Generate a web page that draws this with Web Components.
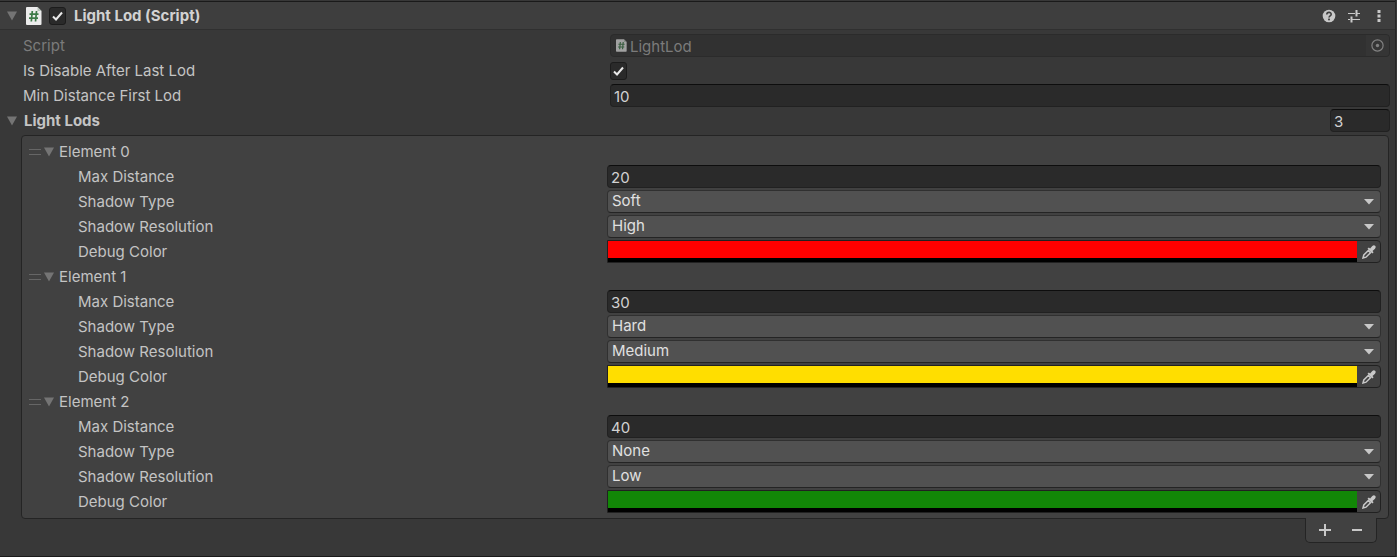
<!DOCTYPE html>
<html lang="en">
<head>
<meta charset="utf-8">
<title>Light Lod (Script)</title>
<style>
html, body { margin: 0; min-height: 100%; background: #383838; }
body { font: 15px/18px Inter, "Liberation Sans", sans-serif; color: #c4c4c4; }
</style>
</head>
<body>
<inspector-panel>
  <component-header heading="Light Lod (Script)"></component-header>
  <object-field label="Script" value="LightLod"></object-field>
  <toggle-field label="Is Disable After Last Lod" checked></toggle-field>
  <number-field label="Min Distance First Lod" value="10"></number-field>
  <reorderable-list label="Light Lods" count="3">
    <lod-element name="Element 0" distance="20" shadow="Soft" resolution="High" color="#ff0000"></lod-element>
    <lod-element name="Element 1" distance="30" shadow="Hard" resolution="Medium" color="#ffde00"></lod-element>
    <lod-element name="Element 2" distance="40" shadow="None" resolution="Low" color="#128707"></lod-element>
  </reorderable-list>
</inspector-panel>

<script>
const base = `
  *, *::before, *::after { box-sizing: border-box; }
  :host { display: block; }
  button, input, select { font: inherit; color: inherit; margin: 0; }
  button { appearance: none; background: none; border: 0; padding: 0; display: grid; place-items: center; }
  svg { display: block; flex: none; }
  .num { width: 100%; height: 23px; padding: 2px 3px 0; color: #d2d2d2; background: #2a2a2a;
    border: 1px solid #212121; border-top-color: #0d0d0d; border-radius: 4px; outline: 0; }
  .check { appearance: none; width: 17px; height: 18px; border: 1px solid #1c1c1c; border-radius: 3px;
    background: #2a2a2a url("data:image/svg+xml,%3Csvg xmlns='http://www.w3.org/2000/svg' width='15' height='16'%3E%3Cpath d='M3 8.5l3 3L12 4.5' fill='none' stroke='%23e8e8e8' stroke-width='2'/%3E%3C/svg%3E") center no-repeat; }
  .check:not(:checked) { background-image: none; }
`;
const esc = s => (s || '').replace(/[&<>"]/g, c => '&#' + c.charCodeAt(0) + ';');
const fold = '<svg width="12" height="10" viewBox="0 0 12 10"><path d="M1 .500h10L6 9.500z" fill="#747474"/></svg>';
const scriptIcon = (w, h) => `<svg width="${w}" height="${h}" viewBox="0 0 16 18"><path d="M1 0h10.500L15.500 4v13a1 1 0 0 1-1 1H1a1 1 0 0 1-1-1V1a1 1 0 0 1 1-1z" fill="#ececec"/><path d="M11.500 0v4h4z" fill="#b9c4bb"/><path d="M6.300 4 5.300 14.500M10.500 4 9.500 14.500M3.500 7.200h9M3 11.200h9" stroke="#3d7a48" stroke-width="1.700" fill="none"/></svg>`;

class Part extends HTMLElement {
  constructor() { super(); this.attachShadow({ mode: 'open' }); }
  connectedCallback() {
    this.shadowRoot.innerHTML = `<style>${base}${this.css()}</style>${this.markup()}`;
  }
  attr(name) { return esc(this.getAttribute(name)); }
  css() { return ''; }
}

/* A label and its control, side by side. */
class Field extends Part {
  css() {
    return `
      .row { display: grid; grid-template-columns: var(--columns, 587fr 780fr); height: 23px; align-items: center; }
      .name { overflow: hidden; white-space: nowrap; text-overflow: ellipsis; }
    ` + this.controlCss();
  }
  controlCss() { return ''; }
  markup() {
    return `<div class="row"><label class="name" for="control">${this.attr('label')}</label>${this.control()}</div>`;
  }
}

customElements.define('number-field', class extends Field {
  control() { return `<input id="control" class="num" type="text" inputmode="numeric" value="${this.attr('value')}">`; }
});

customElements.define('toggle-field', class extends Field {
  control() { return `<input id="control" class="check" type="checkbox" ${this.hasAttribute('checked') ? 'checked' : ''}>`; }
});

customElements.define('object-field', class extends Field {
  controlCss() {
    return `
      .name { color: #7b7b7b; }
      .box { display: flex; align-items: center; height: 23px; padding-left: 5px; gap: 3px;
        background: #313131; border: 1px solid #2b2b2b; border-radius: 4px; overflow: hidden; }
      .box > svg { opacity: .6; }
      input { flex: 1; min-width: 0; height: 21px; padding: 1px 0 0; border: 0; background: none; color: #7b7b7b; outline: 0; }
      button { width: 23px; height: 21px; background: #353535; }
    `;
  }
  control() {
    return `<div class="box">${scriptIcon(11, 13)}
      <input id="control" type="text" value="${this.attr('value')}" disabled>
      <button type="button" aria-label="Select object" disabled><svg width="13" height="13" viewBox="0 0 13 13"><circle cx="6.500" cy="6.500" r="5.600" fill="none" stroke="#818181" stroke-width="1.200"/><circle cx="6.500" cy="6.500" r="1.700" fill="#818181"/></svg></button></div>`;
  }
});

customElements.define('enum-field', class extends Field {
  controlCss() {
    return `
      .box { display: grid; align-items: center; }
      .box > * { grid-area: 1 / 1; }
      .box > svg { justify-self: end; margin-right: 7px; pointer-events: none; }
      select { appearance: none; width: 100%; height: 23px; padding: 0 24px 2px 4px; color: #e0e0e0; background: #515151;
        border: 1px solid #303030; border-bottom-color: #242424; border-radius: 4px; outline: 0; }
    `;
  }
  control() {
    const value = this.getAttribute('value');
    const options = this.getAttribute('options').split(' ')
      .map(o => `<option${o === value ? ' selected' : ''}>${esc(o)}</option>`).join('');
    return `<div class="box"><select id="control">${options}</select>
      <svg width="10" height="6" viewBox="0 0 10 6"><path d="M0 0h10L5 5.500z" fill="#c8c8c8"/></svg></div>`;
  }
});

customElements.define('color-field', class extends Field {
  controlCss() {
    return `
      .box { display: flex; height: 23px; border: 1px solid #212121; border-radius: 0 4px 4px 0; background: #414141; }
      input { appearance: none; flex: 1; min-width: 0; height: 21px; padding: 0; border: 0; border-bottom: 4px solid #000; background: none; border-radius: 0; }
      input::-webkit-color-swatch-wrapper { padding: 0; }
      input::-webkit-color-swatch { border: 0; border-radius: 0; }
      button { width: 23px; }
    `;
  }
  control() {
    return `<div class="box"><input id="control" type="color" value="${this.attr('value')}">
      <button type="button" aria-label="Pick a color"><svg width="14" height="14" viewBox="0 0 14 14"><path d="M1 13l.800-3L6.300 5.500l2.200 2.200L4 12.200z" fill="#414141" stroke="#c8c8c8" stroke-width="1.500"/><path d="M5.500 3.800l1.300-1.300 1.300 1L10.300 1q1.600-1.400 2.800-.200T13 3.700L10.500 6l1.100 1.200-1.300 1.300z" fill="#c8c8c8"/></svg></button></div>`;
  }
});

customElements.define('component-header', class extends Part {
  css() {
    return `
      :host { background: #3e3e3e; border-top: 1px solid #1a1a1a; border-bottom: 1px solid #303030; }
      header { display: flex; align-items: center; height: 27px; padding: 0 6px; }
      .fold { margin-right: 8px; }
      .check { margin: 0 8px 0 7px; }
      label { flex: 1; font-weight: 700; color: #d2d2d2; }
      .tools { display: flex; gap: 5px; }
      .tools button { width: 20px; height: 20px; }
    `;
  }
  markup() {
    return `<header>
      <button class="fold" type="button" aria-label="Fold component">${fold}</button>
      ${scriptIcon(16, 18)}
      <input id="enabled" class="check" type="checkbox" checked>
      <label for="enabled">${this.attr('heading')}</label>
      <div class="tools">
        <button type="button" aria-label="Help"><svg width="14" height="14" viewBox="0 0 14 14"><circle cx="7" cy="7" r="6.300" fill="#c8c8c8"/><path d="M4.800 5.500C4.800 2.600 9.300 2.700 9.200 5.300 9.200 6.900 7 6.800 7 8.600" fill="none" stroke="#3e3e3e" stroke-width="1.600"/><rect x="6.100" y="9.600" width="1.800" height="1.700" fill="#3e3e3e"/></svg></button>
        <button type="button" aria-label="Presets"><svg width="14" height="14" viewBox="0 0 14 14"><path d="M1 4.500h7M9 4.500h4M1 10.500h2M5 10.500h8" stroke="#c8c8c8" stroke-width="1.200"/><path d="M9.500 1v6.500M4.500 7.500v6" stroke="#c8c8c8" stroke-width="2"/></svg></button>
        <button type="button" aria-label="More"><svg width="4" height="14" viewBox="0 0 4 14"><path d="M.500 1h3v3h-3zM.500 5.500h3v3h-3zM.500 10h3v3h-3z" fill="#c8c8c8"/></svg></button>
      </div>
    </header>`;
  }
});

customElements.define('lod-element', class extends Part {
  css() {
    return `
      .head { display: flex; align-items: center; height: 23px; }
      .grip { margin-right: 2px; }
      .fold { margin-right: 4px; }
      .body { display: grid; gap: 2px; padding: 2px 0 0 49px; --columns: 529fr 774fr; }
    `;
  }
  markup() {
    return `<div class="head">
        <svg class="grip" width="12" height="6" viewBox="0 0 12 6"><path d="M0 .500h12M0 5.500h12" stroke="#666"/></svg>
        <button class="fold" type="button" aria-label="Fold element">${fold}</button>
        <span>${this.attr('name')}</span>
      </div>
      <div class="body">
        <number-field label="Max Distance" value="${this.attr('distance')}"></number-field>
        <enum-field label="Shadow Type" options="None Hard Soft" value="${this.attr('shadow')}"></enum-field>
        <enum-field label="Shadow Resolution" options="Low Medium High" value="${this.attr('resolution')}"></enum-field>
        <color-field label="Debug Color" value="${this.attr('color')}"></color-field>
      </div>`;
  }
});

customElements.define('reorderable-list', class extends Part {
  css() {
    return `
      .head { display: flex; align-items: center; height: 23px; margin-left: -17px; }
      .fold { margin-right: 6px; }
      label { flex: 1; font-weight: 700; }
      .head .num { width: 60px; }
      .items { display: grid; gap: 2px; margin: 3px 1px 0 -2px; padding: 4px 7px 5px; background: #414141;
        border: 1px solid #242424; border-radius: 4px; }
      .foot { display: flex; justify-content: space-evenly; width: 72px; height: 25px; margin: -1px 13px 0 auto; position: relative;
        background: #414141; border: 1px solid #242424; border-top: 0; border-radius: 0 0 5px 5px; }
      .foot button { width: 24px; }
    `;
  }
  markup() {
    return `<div class="head">
        <button class="fold" type="button" aria-label="Fold list">${fold}</button>
        <label for="size">${this.attr('label')}</label>
        <input id="size" class="num" type="text" inputmode="numeric" value="${this.attr('count')}">
      </div>
      <div class="items"><slot></slot></div>
      <div class="foot">
        <button type="button" aria-label="Add"><svg width="12" height="12" viewBox="0 0 12 12"><path d="M0 6h12M6 0v12" stroke="#c8c8c8" stroke-width="2"/></svg></button>
        <button type="button" aria-label="Remove"><svg width="10" height="12" viewBox="0 0 10 12"><path d="M0 6h10" stroke="#c8c8c8" stroke-width="2"/></svg></button>
      </div>`;
  }
});

customElements.define('inspector-panel', class extends Part {
  css() {
    return `
      :host { padding-top: 1px; margin-right: 1px; border-right: 1px solid #282828; border-bottom: 1px solid #1a1a1a; }
      .fields { display: grid; gap: 2px; padding: 0 5px 13px 23px; }
      ::slotted(component-header) { margin: 0 -5px 2px -23px; }
    `;
  }
  markup() { return '<div class="fields"><slot></slot></div>'; }
});
</script>
</body>
</html>
